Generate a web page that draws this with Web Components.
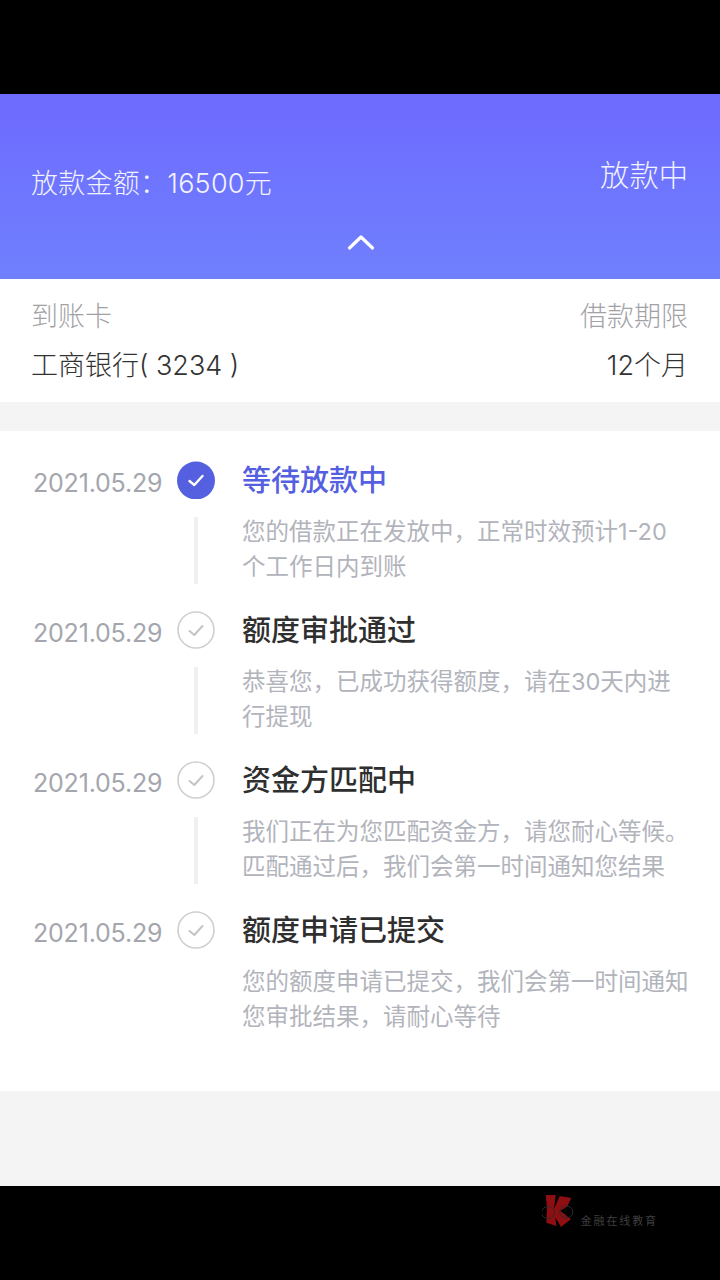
<!DOCTYPE html>
<html lang="zh">
<head>
<meta charset="utf-8">
<style>
  html, body { margin: 0; background: #000; }
  body { width: 720px; height: 1280px; overflow: hidden; font-family: "Inter", "Noto Sans CJK SC", "Noto Sans", sans-serif; }
</style>
</head>
<body>
<loan-screen>
  <loan-header amount="放款金额：16500元" status="放款中"></loan-header>
  <loan-info card="工商银行( 3234 )" term="12个月"></loan-info>
  <loan-timeline>
    <timeline-step date="2021.05.29" title="等待放款中" active line>您的借款正在发放中，正常时效预计1-20<br>个工作日内到账</timeline-step>
    <timeline-step date="2021.05.29" title="额度审批通过" line>恭喜您，已成功获得额度，请在30天内进<br>行提现</timeline-step>
    <timeline-step date="2021.05.29" title="资金方匹配中" line>我们正在为您匹配资金方，请您耐心等候。<br>匹配通过后，我们会第一时间通知您结果</timeline-step>
    <timeline-step date="2021.05.29" title="额度申请已提交">您的额度申请已提交，我们会第一时间通知<br>您审批结果，请耐心等待</timeline-step>
  </loan-timeline>
</loan-screen>

<template id="screen">
  <style>
    :host { display: flex; flex-direction: column; height: 1280px; background: #000; }
    .top { height: 94px; background: #000; }
    .gap { height: 29px; background: #f4f4f4; }
    .rest { height: 95px; background: #f4f4f4; }
    .foot {
      flex: 1; background: #000; display: flex; align-items: flex-start; justify-content: flex-end;
      padding: 8px 62px 0 0; gap: 5px;
    }
    .foot svg { width: 34px; height: 34px; display: block; }
    .foot span { font-size: 11px; line-height: 14px; letter-spacing: 1.9px; color: #3f3f3f; margin-top: 20px; }
  </style>
  <div class="top"></div>
  <slot name="head"></slot>
  <div class="gap"></div>
  <slot></slot>
  <div class="rest"></div>
  <div class="foot">
    <svg viewBox="0 0 34 34">
      <path d="M3.7 1 L13.7 1 L12 15 L17.7 2 L29.3 4 L25 12.7 L18.3 16.7 L29 25.3 L19 33 L13.3 23.3 L14.3 32 L4.3 28.7 L5 14.3 Z" fill="#8f0e12"/>
      <ellipse cx="6" cy="18.5" rx="6.5" ry="6" fill="none" stroke="#2c2c2c" stroke-width="1"/>
      <ellipse cx="24.3" cy="18" rx="6.5" ry="6" fill="none" stroke="#2c2c2c" stroke-width="1"/>
    </svg>
    <span>金融在线教育</span>
  </div>
</template>

<template id="header">
  <style>
    :host {
      display: block; height: 185px; box-sizing: border-box; padding: 59px 32px 0 31px;
      background: linear-gradient(180deg, #6e6aff 0%, #6f80fd 100%); color: #fff;
    }
    .row { display: flex; justify-content: space-between; align-items: flex-start; }
    .amount { font-size: 27px; line-height: 40px; margin-top: 11px; font-weight: 300; color: #f2f3ff; letter-spacing: .25px; }
    .status { font-size: 29.3px; line-height: 46px; font-weight: 300; color: #f2f3ff; }
    svg { display: block; width: 28px; height: 18px; margin: 29px auto 0; position: relative; left: 1px; }
  </style>
  <div class="row"><span class="amount"></span><span class="status"></span></div>
  <svg viewBox="0 0 28 18"><path d="M2.5 15 L14 4 L25.5 15" fill="none" stroke="#fff" stroke-width="3.2" stroke-linecap="round" stroke-linejoin="round"/></svg>
</template>

<template id="info">
  <style>
    :host {
      display: block; height: 123px; box-sizing: border-box; padding: 18px 32px 0 31px; background: #fff;
      font-size: 27px; font-weight: 300;
    }
    .row { display: flex; justify-content: space-between; line-height: 40px; }
    .label { color: #a2a2a6; }
    .value { color: #333; margin-top: 9px; }
  </style>
  <div class="row label"><span>到账卡</span><span>借款期限</span></div>
  <div class="row value"><span class="card"></span><span class="term"></span></div>
</template>

<template id="timeline">
  <style>
    :host { display: block; height: 660px; box-sizing: border-box; padding-top: 30px; background: #fff; }
  </style>
  <slot></slot>
</template>

<template id="step">
  <style>
    :host {
      display: grid; height: 150px; box-sizing: border-box;
      grid-template-columns: 144px 38px 1fr; grid-template-rows: 38px auto; column-gap: 0;
      padding-left: 33px; color: #333;
    }
    .date { font-size: 25px; line-height: 44px; color: #a4a6ae; font-weight: 400; white-space: nowrap; letter-spacing: -.2px; }
    .dot { width: 38px; height: 38px; grid-column: 2; display: block; }
    .title { grid-column: 3; margin: 1px 0 0 27px; font-size: 29px; line-height: 38px; font-weight: 500; color: #2f2f2f; white-space: nowrap; }
    :host([active]) .title { color: #5560e0; }
    .line { grid-column: 2; justify-self: center; width: 4px; height: 67px; margin-top: 18px; background: #f0f0f3; visibility: hidden; }
    :host([line]) .line { visibility: visible; }
    .text {
      grid-column: 3; margin: 15px 0 0 27px; font-size: 23.5px; line-height: 35px; color: #b2b4bc;
      white-space: nowrap; font-weight: 400;
    }
  </style>
  <span class="date"></span>
  <svg class="dot" viewBox="0 0 38 38"></svg>
  <span class="title"></span>
  <div class="line"></div>
  <div class="text"><slot></slot></div>
</template>

<script>
  function stamp(host, id) {
    const shadow = host.attachShadow({ mode: 'open' });
    shadow.appendChild(document.getElementById(id).content.cloneNode(true));
    return shadow;
  }

  class LoanScreen extends HTMLElement {
    constructor() {
      super();
      stamp(this, 'screen');
    }
    connectedCallback() {
      const head = this.querySelector('loan-header');
      const info = this.querySelector('loan-info');
      if (head) head.slot = 'head';
      if (info) info.slot = 'head';
    }
  }

  class LoanHeader extends HTMLElement {
    constructor() {
      super();
      this.shadow = stamp(this, 'header');
    }
    connectedCallback() {
      this.shadow.querySelector('.amount').textContent = this.getAttribute('amount');
      this.shadow.querySelector('.status').textContent = this.getAttribute('status');
    }
  }

  class LoanInfo extends HTMLElement {
    constructor() {
      super();
      this.shadow = stamp(this, 'info');
    }
    connectedCallback() {
      this.shadow.querySelector('.card').textContent = this.getAttribute('card');
      this.shadow.querySelector('.term').textContent = this.getAttribute('term');
    }
  }

  class LoanTimeline extends HTMLElement {
    constructor() {
      super();
      stamp(this, 'timeline');
    }
  }

  class TimelineStep extends HTMLElement {
    constructor() {
      super();
      this.shadow = stamp(this, 'step');
    }
    connectedCallback() {
      this.shadow.querySelector('.date').textContent = this.getAttribute('date');
      this.shadow.querySelector('.title').textContent = this.getAttribute('title');
      const dot = this.shadow.querySelector('.dot');
      if (this.hasAttribute('active')) {
        dot.innerHTML = '<circle cx="19" cy="19.5" r="19" fill="#5560e0"/><path d="M12.5 20 L17.3 24 L25.5 15" fill="none" stroke="#fff" stroke-width="2.4" stroke-linecap="round" stroke-linejoin="round"/>';
      } else {
        dot.innerHTML = '<circle cx="19" cy="19" r="18" fill="none" stroke="#cfcfd2" stroke-width="1.6"/><path d="M12.5 20 L17.3 24 L25.5 15" fill="none" stroke="#c4c4c8" stroke-width="2" stroke-linecap="round" stroke-linejoin="round"/>';
      }
    }
  }

  customElements.define('loan-screen', LoanScreen);
  customElements.define('loan-header', LoanHeader);
  customElements.define('loan-info', LoanInfo);
  customElements.define('loan-timeline', LoanTimeline);
  customElements.define('timeline-step', TimelineStep);
</script>
</body>
</html>
